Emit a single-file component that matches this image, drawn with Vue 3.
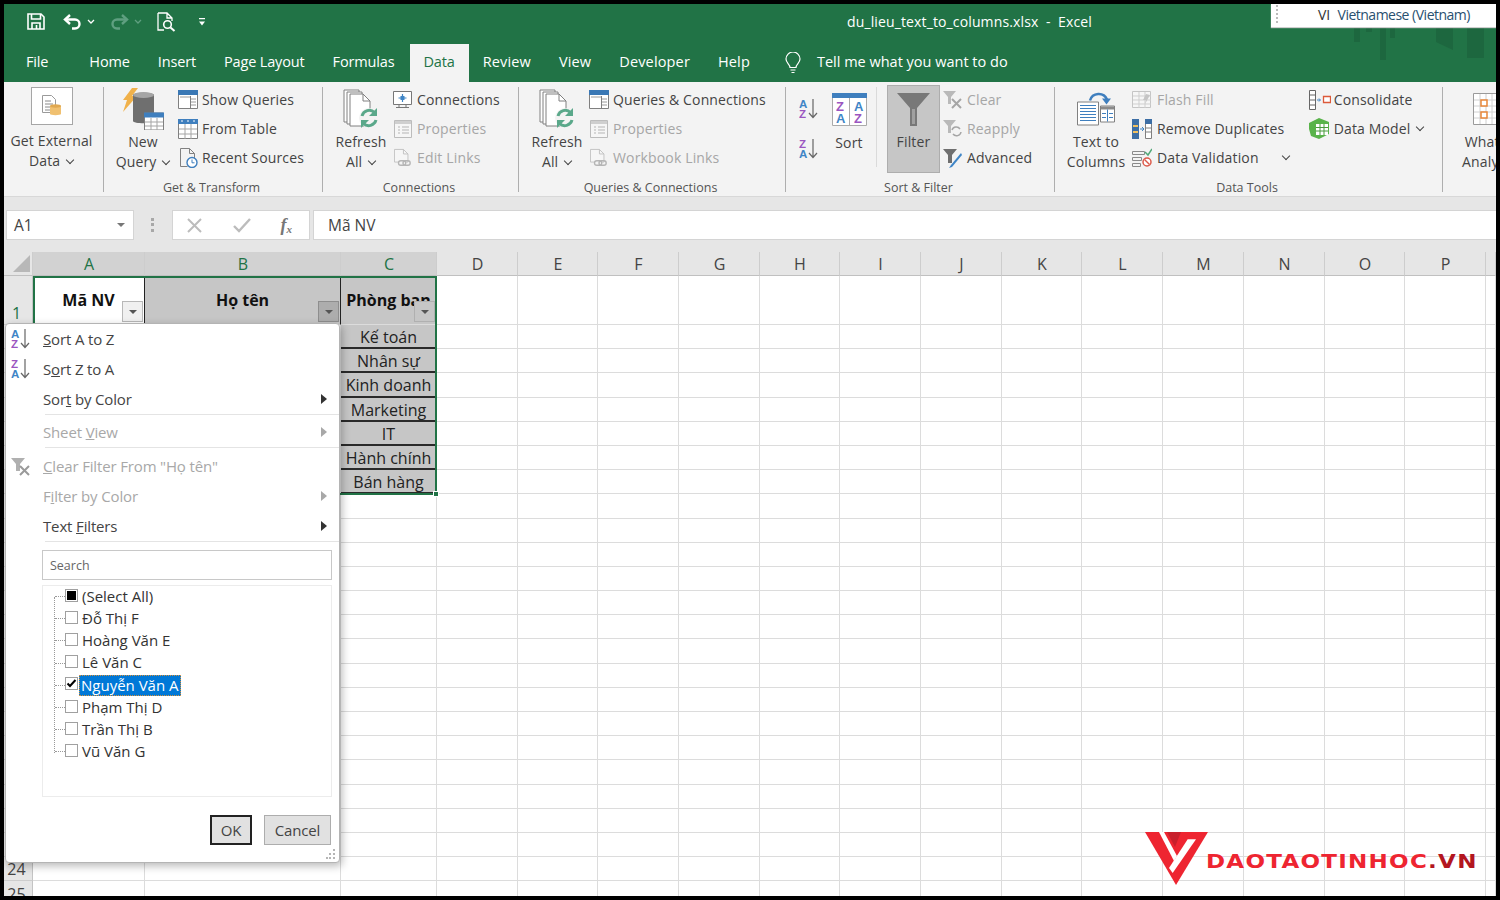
<script setup>
const colNames = ['', 'A', 'B', 'C', 'D', 'E', 'F', 'G', 'H', 'I', 'J', 'K', 'L', 'M', 'N', 'O', 'P', '']
const dept = { 2: 'Kế toán', 3: 'Nhân sự', 4: 'Kinh doanh', 5: 'Marketing', 6: 'IT', 7: 'Hành chính', 8: 'Bán hàng' }
const rows = Array.from({ length: 25 }, (_, i) => i + 1)
const tabs = ['Home', 'Insert', 'Page Layout', 'Formulas', 'Data', 'Review', 'View', 'Developer', 'Help']
const names = [
  { t: '(Select All)', s: 'mixed' },
  { t: 'Đỗ Thị F', s: '' },
  { t: 'Hoàng Văn E', s: '' },
  { t: 'Lê Văn C', s: '' },
  { t: 'Nguyễn Văn A', s: 'checked' },
  { t: 'Phạm Thị D', s: '' },
  { t: 'Trần Thị B', s: '' },
  { t: 'Vũ Văn G', s: '' }
]
function cellText(r, c) {
  if (r === 1 && c === 1) return 'Mã NV'
  if (r === 1 && c === 2) return 'Họ tên'
  if (r === 1 && c === 3) return 'Phòng ban'
  if (c === 3 && dept[r]) return dept[r]
  return ''
}
function cellClass(r, c) {
  return {
    head1: r === 1 && c >= 1 && c <= 3,
    white: r === 1 && c === 1,
    grey: (r === 1 && (c === 2 || c === 3)) || (c === 3 && !!dept[r]),
    dept: c === 3 && !!dept[r]
  }
}
</script>

<template>
  <div class="screen">
    <svg class="defs" width="0" height="0" aria-hidden="true">
      <defs>
        <symbol id="i-refresh" viewBox="0 0 36 40">
          <path d="M1 1h15v32H1z" fill="#fff" stroke="#808080" />
          <path d="M4 3h15v32H4z" fill="#fff" stroke="#808080" />
          <path d="M7 5h13l7 7v25H7z" fill="#fff" stroke="#808080" />
          <path d="M20 5v7h7" fill="none" stroke="#808080" />
          <circle cx="26" cy="29" r="10" fill="#f3f3f3" />
          <path d="M19 27a7.5 7.5 0 0 1 12.5-3.5" fill="none" stroke="#5aa88a" stroke-width="3" />
          <path d="M34 19v8h-8z" fill="#5aa88a" />
          <path d="M33 31a7.5 7.5 0 0 1-12.5 3.5" fill="none" stroke="#5aa88a" stroke-width="3" />
          <path d="M18 39v-8h8z" fill="#5aa88a" />
        </symbol>
        <symbol id="i-queries" viewBox="0 0 20 19">
          <path d="M.5 .5h19v18H.5z" fill="#fff" stroke="#808080" />
          <path d="M0 0h20v5H0z" fill="#3a78b5" />
          <path d="M2 7h10M13 9h5M13 12h5M13 15h5" stroke="#9a9a9a" fill="none" />
          <path d="M12.5 6v12" stroke="#808080" />
        </symbol>
        <symbol id="i-props" viewBox="0 0 18 18">
          <path d="M.5 .5h17v17H.5z" fill="#f6f6f6" stroke="#bcbcbc" />
          <path d="M1 1h16v3H1z" fill="#cfcfcf" />
          <path d="M4 7h2M8 7h7M4 10h2M8 10h7M4 13h2M8 13h7" stroke="#b5b5b5" />
        </symbol>
        <symbol id="i-links" viewBox="0 0 20 20">
          <path d="M.5 .5h10l5 5v9H.5z" fill="#f6f6f6" stroke="#c0c0c0" />
          <path d="M10.5 .5v5h5" fill="none" stroke="#c0c0c0" />
          <rect x="5" y="13" width="8" height="5" rx="2.5" fill="#f3f3f3" stroke="#b5b5b5" stroke-width="1.5" />
          <rect x="10" y="13" width="8" height="5" rx="2.5" fill="none" stroke="#b5b5b5" stroke-width="1.5" />
        </symbol>
        <symbol id="i-az" viewBox="0 0 20 22">
          <text x="0" y="10" class="svg-letter" fill="#3f85c6">A</text>
          <text x="0" y="20" class="svg-letter" fill="#9a56c0">Z</text>
          <path d="M14 1v18M10 15l4 4.500 4-4.500" fill="none" stroke="#666" stroke-width="1.200" />
        </symbol>
        <symbol id="i-za" viewBox="0 0 20 22">
          <text x="0" y="10" class="svg-letter" fill="#9a56c0">Z</text>
          <text x="0" y="20" class="svg-letter" fill="#3f85c6">A</text>
          <path d="M14 1v18M10 15l4 4.500 4-4.500" fill="none" stroke="#666" stroke-width="1.200" />
        </symbol>
      </defs>
    </svg>

    <header class="title-area">
      <div class="title-row">
        <div class="qat">
          <svg class="q-save" width="18" height="17" viewBox="0 0 18 17" fill="none" stroke="#fff" stroke-width="1.600"><path d="M1 1h13l3 3v12H1z" /><path d="M4.500 1v5h9V1M5 16v-6h8v6" /><path d="M9.500 12v4" /></svg>
          <svg class="q-undo" width="19" height="16" viewBox="0 0 19 16" fill="none" stroke="#fff" stroke-width="2.400"><path d="M7 1L2 5.500 7 10" /><path d="M2 5.500h10a4.500 4.500 0 0 1 0 9H9" /></svg>
          <svg class="q-chev" width="8" height="5" viewBox="0 0 8 5" fill="none" stroke="#fff" stroke-width="1.300"><path d="M1 1l3 3 3-3" /></svg>
          <svg class="q-redo" width="19" height="16" viewBox="0 0 19 16" fill="none" stroke="#5f9f80" stroke-width="2.400"><path d="M12 1l5 4.500-5 4.500" /><path d="M17 5.500H7a4.500 4.500 0 0 0 0 9h3" /></svg>
          <svg class="q-chev" width="8" height="5" viewBox="0 0 8 5" fill="none" stroke="#5f9f80" stroke-width="1.300"><path d="M1 1l3 3 3-3" /></svg>
          <svg class="q-prev" width="20" height="20" viewBox="0 0 20 20" fill="none" stroke="#fff" stroke-width="1.300"><path d="M1 1h9l5 5v3M10 1v5h5M1 1v17h6" /><circle cx="10.500" cy="12.500" r="3.800" stroke-width="1.600" /><path d="M13.500 15.500l4 3.500" stroke-width="2" /></svg>
          <svg class="q-cust" width="7" height="8" viewBox="0 0 7 8" fill="#fff"><path d="M0 0h6v1.200H0zM0 3.500h6L3 7.500z" /></svg>
        </div>
        <div class="doc-title">du_lieu_text_to_columns.xlsx&nbsp; -&nbsp; Excel</div>
      </div>
      <nav class="tab-row">
        <span class="tab file">File</span>
        <span v-for="t in tabs" :key="t" class="tab" :class="{ active: t === 'Data' }">{{ t }}</span>
        <svg class="bulb" width="16" height="22" viewBox="0 0 16 22" fill="none" stroke="#fff" stroke-width="1.200"><path d="M5 15.500c0-3-4-4.500-4-8.500a7 7 0 0 1 14 0c0 4-4 5.500-4 8.500z" /><path d="M5.500 18h5M6.500 20.500h3" /></svg>
        <span class="tell">Tell me what you want to do</span>
      </nav>
      <svg class="watermark" width="136" height="34" viewBox="0 0 136 34" fill="#1d673f"><path d="M0 0h6v14H0zM12 0h6v4h-6zM26 0h6v32h-6zM36 0h5v10h-5zM82 0h17v22l-17-8zM113 0h17v30h-17z" /></svg>
      <div class="lang"><span class="grip-dots"></span><span class="lang-text">VI&nbsp; <span class="lang-name">Vietnamese (Vietnam)</span></span></div>
    </header>

    <section class="ribbon">
      <div class="group g1">
        <div class="body">
          <div class="big w-ext">
            <div class="ext-box">
              <svg width="20" height="22" viewBox="0 0 20 22"><path d="M.5 .5h9l4 4v13H.5z" fill="#fff" stroke="#9a9a9a" /><path d="M3 6h6M3 9h8M3 12h5M3 15h5" stroke="#8a8a8a" /><path d="M8 11v8c0 1.500 11 1.500 11 0v-8z" fill="#f0c070" /><ellipse cx="13.500" cy="11" rx="5.500" ry="1.700" fill="#e0a850" /></svg>
            </div>
            <div class="big-label ext-label">Get External<br />Data <i class="chev"></i></div>
          </div>
        </div>
        <div class="label">&nbsp;</div>
      </div>

      <div class="group g2">
        <div class="body">
          <div class="big w-new">
            <svg class="big-icon" width="42" height="42" viewBox="0 0 42 42">
              <path d="M10 0h6L10 8h5L1 24l4-12H1z" fill="#f0b14a" />
              <path d="M11 7c0-3 21-3 21 0v26c0 3-21 3-21 0z" fill="#6f6f6f" />
              <ellipse cx="21.500" cy="7" rx="10.500" ry="3" fill="#a5a5a5" />
              <path d="M22.500 25h19v17h-19z" fill="#fff" stroke="#808080" />
              <path d="M22 24.500h20v5H22z" fill="#3f7fbe" />
              <path d="M23 34h18M23 38h18M29 30v12M35 30v12" stroke="#a5a5a5" />
            </svg>
            <div class="big-label">New<br />Query <i class="chev"></i></div>
          </div>
          <div class="col col-gt">
            <div class="small"><svg class="s-icon" width="20" height="19"><use href="#i-queries" /></svg><span>Show Queries</span></div>
            <div class="small"><svg class="s-icon" width="20" height="20" viewBox="0 0 20 20"><path d="M.5 .5h19v19H.5z" fill="#fff" stroke="#808080" /><path d="M0 0h20v5H0z" fill="#3f7fbe" /><path d="M1 10h18M1 15h18M7 5v15M13 5v15" stroke="#a5a5a5" /><path d="M3 2h2M9 2h2M15 2h2" stroke="#fff" /></svg><span>From Table</span></div>
            <div class="small"><svg class="s-icon" width="20" height="20" viewBox="0 0 20 20"><path d="M2.500 .5h9l5 5v6M11.500 .5v5h5M2.500 .5v18h7" fill="none" stroke="#808080" /><circle cx="14" cy="14.500" r="5" fill="#fff" stroke="#3f7fbe" stroke-width="1.400" /><path d="M14 11.500v3.300h2.500" fill="none" stroke="#3f7fbe" /></svg><span>Recent Sources</span></div>
          </div>
        </div>
        <div class="label">Get &amp; Transform</div>
      </div>

      <div class="group g3">
        <div class="body">
          <div class="big w-ref">
            <svg class="big-icon" width="36" height="40"><use href="#i-refresh" /></svg>
            <div class="big-label">Refresh<br />All <i class="chev"></i></div>
          </div>
          <div class="col col-conn">
            <div class="small"><svg class="s-icon" width="20" height="18" viewBox="0 0 20 18"><path d="M.5 .5h18v13H.5z" fill="#fff" stroke="#777" /><path d="M3 16.500h13M6 14v2.500M13 14v2.500" stroke="#777" /><path d="M9.500 3v8M5.500 7h8" stroke="#3f85c6" stroke-width="1.200" /><rect x="7.500" y="5" width="4" height="4" fill="#3f85c6" /></svg><span>Connections</span></div>
            <div class="small dim"><svg class="s-icon" width="18" height="18"><use href="#i-props" /></svg><span>Properties</span></div>
            <div class="small dim"><svg class="s-icon" width="18" height="20"><use href="#i-links" /></svg><span>Edit Links</span></div>
          </div>
        </div>
        <div class="label">Connections</div>
      </div>

      <div class="group g4">
        <div class="body">
          <div class="big w-ref">
            <svg class="big-icon" width="36" height="40"><use href="#i-refresh" /></svg>
            <div class="big-label">Refresh<br />All <i class="chev"></i></div>
          </div>
          <div class="col col-conn">
            <div class="small"><svg class="s-icon" width="20" height="19"><use href="#i-queries" /></svg><span>Queries &amp; Connections</span></div>
            <div class="small dim"><svg class="s-icon" width="18" height="18"><use href="#i-props" /></svg><span>Properties</span></div>
            <div class="small dim"><svg class="s-icon" width="18" height="20"><use href="#i-links" /></svg><span>Workbook Links</span></div>
          </div>
        </div>
        <div class="label">Queries &amp; Connections</div>
      </div>

      <div class="group g5">
        <div class="body">
          <div class="sort-col">
            <svg width="20" height="22"><use href="#i-az" /></svg>
            <svg width="20" height="22"><use href="#i-za" /></svg>
          </div>
          <div class="big w-sort">
            <svg class="sort-big" width="35" height="33" viewBox="0 0 35 33">
              <path d="M.5 .5h34v32H.5z" fill="#fff" stroke="#aaa" />
              <path d="M0 0h35v5H0z" fill="#3f7fbe" />
              <path d="M17.500 5v28" stroke="#aaa" />
              <text x="4" y="18" class="svg-letter big-l" fill="#9a56c0">Z</text>
              <text x="4" y="30" class="svg-letter big-l" fill="#3f85c6">A</text>
              <text x="22" y="18" class="svg-letter big-l" fill="#3f85c6">A</text>
              <text x="22" y="30" class="svg-letter big-l" fill="#9a56c0">Z</text>
            </svg>
            <div class="big-label sort-label">Sort</div>
          </div>
          <div class="v-sep"></div>
          <div class="filter-btn">
            <svg width="33" height="34" viewBox="0 0 33 34"><path d="M0 0h33L20 15v18h-7V15z" fill="#787878" /><path d="M15 16h3v15h-3z" fill="#a0a0a0" /></svg>
            <div class="big-label filter-label">Filter</div>
          </div>
          <div class="col col-filter">
            <div class="small dim"><svg class="s-icon" width="20" height="19" viewBox="0 0 20 19"><path d="M0 1h13L8 7v7H5V7z" fill="#b9b9b9" /><path d="M9 9l9 9M18 9l-9 9" stroke="#a5a5a5" stroke-width="2" /></svg><span>Clear</span></div>
            <div class="small dim"><svg class="s-icon" width="20" height="19" viewBox="0 0 20 19"><path d="M0 1h13L8 7v7H5V7z" fill="#b9b9b9" /><path d="M9 11a4.500 4.500 0 0 1 8-1M18 13a4.500 4.500 0 0 1-8 2" fill="none" stroke="#a5a5a5" stroke-width="1.500" /></svg><span>Reapply</span></div>
            <div class="small"><svg class="s-icon" width="20" height="20" viewBox="0 0 20 20"><path d="M0 1h14L9 7v8H5V7z" fill="#6f6f6f" /><path d="M18 5L8 17l-2 3 3-1L19 7z" fill="#3f85c6" /></svg><span>Advanced</span></div>
          </div>
        </div>
        <div class="label">Sort &amp; Filter</div>
      </div>

      <div class="group g6">
        <div class="body">
          <div class="big w-ttc">
            <svg class="big-icon" width="38" height="33" viewBox="0 0 38 33">
              <path d="M13 8a9 9 0 0 1 17-1" fill="none" stroke="#3f7fbe" stroke-width="2.500" />
              <path d="M25 6h9l-4.500 6z" fill="#3f7fbe" />
              <path d="M.5 9.500h21v23H.5z" fill="#fff" stroke="#808080" />
              <path d="M3 13h16M3 16h16M3 19h16M3 22h16M3 25h16M3 28h16" stroke="#3f7fbe" />
              <path d="M23.500 13.500h14v16h-14z" fill="#fff" stroke="#808080" />
              <path d="M24 14h13v3H24z" fill="#8a8a8a" />
              <path d="M30.500 17v12M25 21h4M32 21h4M25 25h4M32 25h4" stroke="#3f7fbe" />
            </svg>
            <div class="big-label">Text to<br />Columns</div>
          </div>
          <div class="col col-tools">
            <div class="small dim"><svg class="s-icon" width="20" height="18" viewBox="0 0 20 18"><path d="M.5 .5h18v16H.5z" fill="#f6f6f6" stroke="#c5c5c5" /><path d="M1 5h18M1 9h18M1 13h18M7 1v16M13 1v16" stroke="#cfcfcf" /><path d="M14 3l4 1-5 9 1-4h-3z" fill="#c5c5c5" /></svg><span>Flash Fill</span></div>
            <div class="small"><svg class="s-icon" width="20" height="20" viewBox="0 0 20 20"><path d="M0 0h7v20H0z" fill="#3c6ea5" /><path d="M1 6h5v2H1zM1 12h5v2H1z" fill="#f0c060" /><path d="M13.500 .5h6v19h-6z" fill="#fff" stroke="#808080" /><path d="M13 0h7v5h-7z" fill="#3c6ea5" /><path d="M14 9h5M14 13h5" stroke="#808080" /><path d="M8 10h4M10 8l2 2-2 2" fill="none" stroke="#3f85c6" /></svg><span>Remove Duplicates</span></div>
            <div class="small"><svg class="s-icon" width="20" height="19" viewBox="0 0 20 19"><path d="M.5 3.500h12v3H.5zM.5 9.500h9v3h-9zM.5 15.500h8v3h-8z" fill="#f3f3f3" stroke="#8a8a8a" /><path d="M13 4l3 3 4-6" fill="none" stroke="#52a878" stroke-width="1.500" /><circle cx="15" cy="14" r="4" fill="#fff" stroke="#dc5a4a" stroke-width="1.500" /><path d="M12.500 11.500l5 5" stroke="#dc5a4a" stroke-width="1.400" /></svg><span>Data Validation</span><i class="chev val-chev"></i></div>
          </div>
          <div class="col col-cons">
            <div class="small"><svg class="s-icon" width="22" height="20" viewBox="0 0 22 20"><path d="M.5 .5h6v19h-6zM1 5h5M1 10h5M1 15h5" fill="#fff" stroke="#666" /><path d="M8 10h3M10 8.500l1.500 1.500-1.500 1.500" fill="none" stroke="#3f85c6" /><path d="M14.500 6.500h7v6h-7z" fill="#fff" stroke="#dc5a3a" stroke-width="1.300" /></svg><span>Consolidate</span></div>
            <div class="small"><svg class="s-icon" width="22" height="21" viewBox="0 0 22 21"><path d="M10 0l10 4v12l-10 5-8-3-2-7V5z" fill="#59b34a" /><path d="M7 6h12v11H7z" fill="#fff" /><path d="M7 9.500h12M7 13h12M11 6v11M15 6v11" stroke="#4a9a3e" /></svg><span>Data Model</span><i class="chev dm-chev"></i></div>
          </div>
        </div>
        <div class="label">Data Tools</div>
      </div>

      <div class="group g7">
        <div class="body">
          <div class="big w-what">
            <svg class="big-icon" width="32" height="32" viewBox="0 0 32 32"><path d="M.5 .5h31v31H.5z" fill="#fff" stroke="#9a9a9a" /><path d="M1 7h30M1 13h30M1 19h30M1 25h30M7 1v30M13 1v30M19 1v30M25 1v30" stroke="#d0d0d0" /><path d="M8 7h6v6H8zM8 19h6v6H8z" fill="#fff" stroke="#e8873a" stroke-width="1.500" /></svg>
            <div class="big-label">What-If<br />Analysis</div>
          </div>
        </div>
      </div>
    </section>

    <section class="formula">
      <div class="namebox"><span>A1</span><i class="tri"></i></div>
      <div class="handle"></div>
      <div class="fx-box">
        <svg width="17" height="15" viewBox="0 0 17 15" fill="none" stroke="#bcbcbc" stroke-width="2"><path d="M2 1l13 13M15 1L2 14" /></svg>
        <svg width="18" height="15" viewBox="0 0 18 15" fill="none" stroke="#bcbcbc" stroke-width="2.400"><path d="M1 8l5 5L17 1" /></svg>
        <span class="fx">f<sub>x</sub></span>
      </div>
      <div class="formula-input">Mã NV</div>
    </section>

    <section class="sheet">
      <div class="grid">
        <template v-for="(n, c) in colNames" :key="'h' + c">
          <div class="col-head" :class="{ sel: c >= 1 && c <= 3, corner: c === 0 }">
            <svg v-if="c === 0" width="17" height="17" viewBox="0 0 17 17"><path d="M17 0v17H0z" fill="#b8b8b8" /></svg>
            <template v-else>{{ n }}</template>
          </div>
        </template>
        <template v-for="r in rows" :key="'r' + r">
          <template v-for="(n, c) in colNames" :key="r + '-' + c">
            <div v-if="c === 0" class="row-head" :class="{ first: r === 1 }">{{ r }}</div>
            <div v-else class="cell" :class="cellClass(r, c)">
              <span class="cell-text">{{ cellText(r, c) }}</span>
              <span v-if="r === 1 && c >= 1 && c <= 3" class="fbtn" :class="{ on: c === 2, over: c === 3 }"><i class="tri dark"></i></span>
            </div>
          </template>
        </template>
      </div>

      <div class="selection"><span class="sel-handle"></span></div>

      <div class="menu">
        <div class="item"><span class="m-icon"><svg width="20" height="22"><use href="#i-az" /></svg></span><span><u>S</u>ort A to Z</span></div>
        <div class="item"><span class="m-icon"><svg width="20" height="22"><use href="#i-za" /></svg></span><span>S<u>o</u>rt Z to A</span></div>
        <div class="item"><span class="m-icon"></span><span>Sor<u>t</u> by Color</span><i class="arrow"></i></div>
        <div class="sep"></div>
        <div class="item off"><span class="m-icon"></span><span>Sheet <u>V</u>iew</span><i class="arrow"></i></div>
        <div class="sep sep2"></div>
        <div class="item off"><span class="m-icon"><svg width="20" height="19" viewBox="0 0 20 19"><path d="M0 1h14L9 7v7H5V7z" fill="#b0b0b0" /><path d="M9 9l9 9M18 9l-9 9" stroke="#9a9a9a" stroke-width="2" /></svg></span><span><u>C</u>lear Filter From "Họ tên"</span></div>
        <div class="item off"><span class="m-icon"></span><span>F<u>i</u>lter by Color</span><i class="arrow"></i></div>
        <div class="item"><span class="m-icon"></span><span>Text <u>F</u>ilters</span><i class="arrow"></i></div>
        <div class="sep"></div>
        <div class="search">Search</div>
        <div class="tree">
          <div class="tree-line"></div>
          <div v-for="n in names" :key="n.t" class="tree-row">
            <span class="box" :class="n.s"><svg v-if="n.s === 'checked'" width="11" height="9" viewBox="0 0 11 9" fill="none" stroke="#000" stroke-width="2"><path d="M1.500 4.500L4 7l5.500-6" /></svg></span>
            <span class="tree-text" :class="{ hi: n.s === 'checked' }">{{ n.t }}</span>
          </div>
        </div>
        <div class="actions">
          <button class="btn ok">OK</button>
          <button class="btn">Cancel</button>
        </div>
        <svg class="grip" width="10" height="10" viewBox="0 0 10 10" fill="#b5b5b5"><path d="M7 0h2v2H7zM3 4h2v2H3zM7 4h2v2H7zM0 8h2v2H0zM3 8h2v2H3zM7 8h2v2H7z" /></svg>
      </div>

      <div class="logo">
        <svg width="63" height="53" viewBox="0 0 63 53"><path d="M0 0H63L31 53z" fill="#ee2531" /><path d="M22 0h14l-6 15z" fill="#c8202c" /><path d="M14 0h5l13 24-3 5z" fill="#fff" /><path d="M42.700 7.300H51L27.700 41 24 36z" fill="#fff" /></svg>
        <span class="logo-text">DAOTAOTINHOC<span class="vn">.VN</span></span>
      </div>
    </section>
  </div>
</template>

<style>
html, body { margin: 0; padding: 0; background: #000; }
</style>

<style scoped>
* { box-sizing: border-box; }
.screen {
  width: 1500px; height: 900px; background: #fff; border: 4px solid #000;
  display: flex; flex-direction: column; overflow: hidden; position: relative;
  font-family: "Open Sans", "Noto Sans", sans-serif; font-size: 14px; color: #444;
}
.defs { position: absolute; }
.svg-letter { font-family: "Liberation Sans", sans-serif; font-weight: 700; font-size: 11.500px; }
.big-l { font-size: 13px; }

/* title */
.title-area { height: 78px; background: #217346; color: #fff; position: relative; flex: none; display: flex; flex-direction: column; }
.title-row { height: 35px; margin-bottom: 5px; display: flex; align-items: center; flex: none; }
.qat { width: 843px; display: flex; align-items: center; padding-left: 23px; flex: none; }
.q-undo { margin-left: 18px; }
.q-chev { margin-left: 5px; }
.q-redo { margin-left: 15px; }
.q-prev { margin-left: 15px; }
.q-cust { margin-left: 22px; }
.doc-title { font-size: 14px; letter-spacing: 0.130px; }
.tab-row { height: 38px; display: flex; align-items: stretch; padding-left: 8px; font-size: 14.500px; letter-spacing: -0.150px; }
.tab { padding: 0 14px 3px; display: flex; align-items: center; }
.tab.file { margin-right: 13px; }
.tab.active { background: #f3f3f3; color: #217346; margin-left: 2px; padding-left: 13px; }
.tab.active ~ .tab { letter-spacing: 0.150px; }
.bulb { margin: 8px 0 0 21px; }
.tell { margin-left: 16px; padding-bottom: 3px; display: flex; align-items: center; letter-spacing: 0; }
.lang {
  position: absolute; right: 0; top: 0; width: 225px; height: 23px; padding-bottom: 3px; background: #fff; color: #333;
  display: flex; align-items: center; font-size: 14px; box-shadow: 0 1px 1px #cfcfcf;
}
.grip-dots { width: 2px; height: 18px; margin-left: 5px; border-left: 2px dotted #bbb; }
.lang-text { margin-left: 40px; }
.lang-name { color: #29506f; letter-spacing: -0.500px; }
.watermark { position: absolute; right: 6px; top: 24px; }

/* ribbon */
.ribbon { height: 115px; flex: none; background: #f3f3f3; display: flex; border-bottom: 1px solid #d8d8d8; overflow: hidden; letter-spacing: 0.150px; }
.group { position: relative; flex: none; display: flex; flex-direction: column; padding-top: 3px; }
.group::after { content: ""; position: absolute; right: 0; top: 5px; height: 105px; width: 1px; background: #aeaeae; }
.g7::after { display: none; }
.g1 { width: 100px; }
.g2 { width: 219px; }
.g3 { width: 196px; }
.g4 { width: 267px; }
.g5 { width: 269px; }
.g6 { width: 388px; }
.g7 { width: 60px; }
.g2 .body { padding-left: 9px; }
.g3 .body, .g4 .body { padding-left: 10px; }
.g5 .body { padding-left: 5px; }
.g6 .body { padding-left: 11px; }
.g7 .body { padding-left: 21px; }
.body { display: flex; height: 88px; flex: none; }
.label { height: 20px; margin-top: 5px; padding-right: 4px; text-align: center; font-size: 12.500px; line-height: 20px; color: #555; letter-spacing: 0; }
.big { display: flex; flex-direction: column; align-items: center; flex: none; }
.big-icon { height: 42px; flex: none; margin-top: 3px; }
.big-label { text-align: center; line-height: 20px; margin-top: 2px; white-space: nowrap; }
.chev { display: inline-block; width: 6px; height: 6px; border: solid #444; border-width: 0 1.300px 1.300px 0; transform: rotate(45deg); margin: 0 1px 3px 3px; }
.w-ext { width: 95px; }
.ext-box { width: 42px; height: 38px; background: #fff; border: 1px solid #a6a6a6; display: flex; align-items: center; justify-content: center; margin-top: 2px; }
.big-label.ext-label { margin-top: 6px; }
.w-new { width: 60px; }
.w-ref { width: 56px; }
.w-ttc { width: 60px; }
.w-sort { width: 44px; }
.w-what { width: 50px; }
.col { display: flex; flex-direction: column; flex: none; }
.small { height: 29px; display: flex; align-items: center; white-space: nowrap; }
.s-icon { flex: none; margin-right: 5px; }
.small.dim { color: #a6a6a6; }
.col-gt { margin-left: 5px; }
.col-gt .s-icon { margin-right: 4px; }
.col-conn { margin-left: 3px; }
.col-conn .small { display: grid; grid-template-columns: 21px auto; column-gap: 4px; justify-items: center; align-items: center; }
.col-conn .small span { justify-self: start; }
.col-conn .s-icon { margin: 0; }
.col-filter { margin-left: 3px; }
.col-filter .s-icon { margin-right: 4px; }
.col-tools { margin-left: 6px; }
.col-cons { margin-left: 19px; }
.col-cons .s-icon { margin-right: 3px; }
.val-chev { margin-left: 24px; }
.dm-chev { margin-left: 6px; }
.sort-col { width: 36px; display: flex; flex-direction: column; align-items: center; gap: 18px; padding-top: 13px; }
.sort-big { margin-top: 8px; flex: none; }
.big-label.sort-label { margin-top: 7px; }
.v-sep { width: 1px; height: 80px; background: #dadada; margin: 2px 10px 0 5px; flex: none; }
.filter-btn { width: 53px; height: 88px; background: #c6c6c6; border: 1px solid #adadad; display: flex; flex-direction: column; align-items: center; padding-top: 7px; flex: none; }
.big-label.filter-label { margin-top: 5px; }

/* formula */
.formula { height: 55px; flex: none; background: #e6e6e6; display: flex; align-items: flex-start; padding: 13px 0 0 2px; }
.namebox { width: 128px; height: 30px; background: #fff; border: 1px solid #d4d4d4; display: flex; align-items: center; justify-content: space-between; padding: 0 8px 0 7px; font-size: 15.500px; }
.tri { display: inline-block; width: 0; height: 0; border: 4px solid transparent; border-top: 4px solid #777; border-bottom: 0; }
.handle { width: 4px; height: 14px; margin: 8px 17px 0 17px; border-left: 3px dotted #a8a8a8; }
.fx-box { width: 138px; height: 30px; background: #fff; border: 1px solid #d4d4d4; display: flex; align-items: center; justify-content: space-between; padding: 0 17px 0 13px; }
.fx { font-family: "Liberation Serif", serif; font-style: italic; font-size: 18px; color: #777; font-weight: 700; line-height: 1; }
.fx sub { font-size: 11px; vertical-align: -2px; line-height: 0; }
.formula-input { flex: 1; margin-left: 3px; height: 30px; background: #fff; border: 1px solid #d4d4d4; border-right: 0; display: flex; align-items: center; padding-left: 14px; font-size: 15.500px; }

/* sheet */
.sheet { position: relative; flex: 1; overflow: hidden; background: #fff; }
.grid {
  display: grid;
  grid-template-columns: 29px 112px 196px 96px 81px 80px 81px 81px 80px 81px 81px 80px 81px 81px 81px 80px 81px 10px;
  grid-template-rows: 24px 49px repeat(24, 24.2px);
}
.col-head { background: #e6e6e6; border-right: 1px solid #cdcdcd; border-bottom: 1px solid #c0c0c0; display: flex; align-items: center; justify-content: center; font-size: 16px; color: #444; padding: 1px 0 0 1px; }
.col-head.sel { background: #d2d2d2; color: #217346; }
.col-head.corner { padding: 0 0 0 6px; align-items: center; }
.row-head { background: #e6e6e6; border-right: 1px solid #c4c4c4; border-bottom: 1px solid #cdcdcd; display: flex; align-items: flex-end; justify-content: center; font-size: 16px; line-height: 22px; padding-right: 3px; color: #444; }
.row-head.first { color: #217346; }
.cell { position: relative; border-right: 1px solid #dcdcdc; border-bottom: 1px solid #dcdcdc; display: flex; align-items: center; justify-content: center; font-size: 16px; overflow: hidden; color: #222; white-space: nowrap; }
.head1 { font-weight: 700; border-right: 1px solid #222; font-size: 16px; padding-bottom: 1px; color: #111; }
.white { background: #fff; }
.grey { background: #c6c6c6; }
.dept { border-right: 1px solid #c6c6c6; border-bottom: 2px solid #2a2a2a; padding-top: 2px; }
.fbtn { position: absolute; right: 1px; bottom: 2px; width: 21px; height: 21px; background: #f0f0f0; border: 1px solid #b8b8b8; display: flex; align-items: center; justify-content: center; }
.fbtn.on { background: #adadad; border-color: #8e8e8e; }
.fbtn.over { background: #c6c6c6; border-color: #b0b0b0; }
.tri.dark { border-top-color: #555; }
.selection { position: absolute; left: 29px; top: 24px; width: 404px; height: 219px; border: 2px solid #217346; pointer-events: none; }
.sel-handle { position: absolute; right: -4px; bottom: -4px; width: 6px; height: 6px; background: #217346; border: 1px solid #fff; }

/* menu */
.menu {
  position: absolute; left: 1px; top: 71px; width: 335px; height: 540px; background: #fff;
  border: 1px solid #b4b4b4; border-radius: 4px; box-shadow: 2px 3px 8px rgba(0, 0, 0, .28);
  font-size: 15px; color: #444; letter-spacing: -0.150px;
}
.item { height: 30px; display: flex; align-items: center; padding-right: 12px; flex: none; }
.item.off { color: #a8a8a8; }
.m-icon { width: 37px; flex: none; padding-left: 5px; display: flex; align-items: center; }
.arrow { margin-left: auto; width: 0; height: 0; border: 5px solid transparent; border-left: 6px solid #333; border-right: 0; }
.off .arrow { border-left-color: #a8a8a8; }
.sep { height: 1px; background: #e4e4e4; margin: 0 0 2px 39px; }
.sep2 { margin-bottom: 3px; }
.search { width: 290px; height: 30px; margin: 8px 0 0 36px; border: 1px solid #c8c8c8; padding-left: 7px; display: flex; align-items: center; font-size: 12.500px; color: #666; letter-spacing: 0; }
.tree { position: relative; width: 290px; height: 212px; margin: 5px 0 0 36px; border: 1px solid #ececec; }
.tree-line { position: absolute; left: 11px; top: 11px; height: 156px; border-left: 1px dotted #999; }
.tree-row { height: 22.200px; display: flex; align-items: center; position: relative; padding-left: 22px; color: #333; letter-spacing: 0; }
.tree-row::before { content: ""; position: absolute; left: 12px; top: 10px; width: 10px; border-top: 1px dotted #999; }
.box { width: 13px; height: 13px; border: 1px solid #a0a0a0; background: #fff; flex: none; position: relative; top: -2px; display: flex; align-items: center; justify-content: center; }
.box.mixed::after { content: ""; width: 9px; height: 9px; background: #000; }
.tree-text { margin-left: 2px; padding: 0 1px; border: 1px solid transparent; line-height: 19px; position: relative; top: -1px; }
.tree-text.hi { margin-left: 1px; top: 0; background: #0078d7; color: #fff; border: 1px dotted #d8913a; padding: 0 1px; }
.actions { display: flex; justify-content: flex-end; gap: 12px; margin: 18px 8px 0 0; }
.btn { font: inherit; letter-spacing: inherit; color: #444; height: 30px; width: 67px; background: #e1e1e1; border: 1px solid #adadad; padding: 0; }
.btn.ok { width: 42px; border: 2px solid #222; }
.grip { position: absolute; right: 3px; bottom: 3px; }

/* logo */
.logo { position: absolute; left: 1141px; top: 580px; display: flex; align-items: flex-end; }
.logo-text { font-family: "DejaVu Sans", sans-serif; font-weight: 700; font-size: 20px; letter-spacing: 1.100px; color: #ee2531; margin: 0 0 12px -2px; line-height: 24px; white-space: nowrap; transform: scaleX(1.150); transform-origin: left center; }
.vn { color: #b3161f; }
</style>
